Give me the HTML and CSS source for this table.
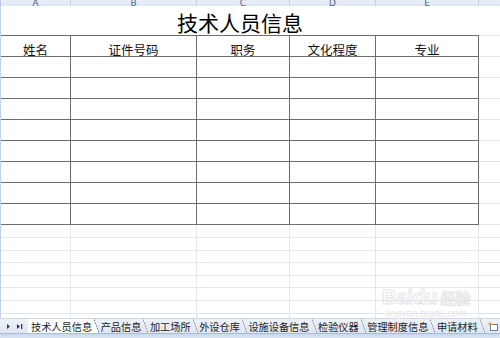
FILE: index.html
```html
<!DOCTYPE html>
<html lang="zh">
<head>
<meta charset="utf-8">
<link rel="stylesheet" href="styles.css">
</head>
<body>
<div class="app">
  <div class="colhead">
    <div class="ch edge"></div>
    <div class="ch">A</div>
    <div class="ch">B</div>
    <div class="ch">C</div>
    <div class="ch">D</div>
    <div class="ch">E</div>
    <div class="ch last"></div>
  </div>

  <div class="row title-row">
    <div class="edge"></div>
    <div class="c title">技术人员信息</div>
    <div class="c f"></div>
  </div>
  <div class="row head">
    <div class="edge"></div>
    <div class="c t">姓名</div>
    <div class="c t">证件号码</div>
    <div class="c t">职务</div>
    <div class="c t">文化程度</div>
    <div class="c t">专业</div>
    <div class="c f"></div>
  </div>
  <div class="row data"><div class="edge"></div><div class="c t"></div><div class="c t"></div><div class="c t"></div><div class="c t"></div><div class="c t"></div><div class="c f"></div></div>
  <div class="row data"><div class="edge"></div><div class="c t"></div><div class="c t"></div><div class="c t"></div><div class="c t"></div><div class="c t"></div><div class="c f"></div></div>
  <div class="row data"><div class="edge"></div><div class="c t"></div><div class="c t"></div><div class="c t"></div><div class="c t"></div><div class="c t"></div><div class="c f"></div></div>
  <div class="row data"><div class="edge"></div><div class="c t"></div><div class="c t"></div><div class="c t"></div><div class="c t"></div><div class="c t"></div><div class="c f"></div></div>
  <div class="row data"><div class="edge"></div><div class="c t"></div><div class="c t"></div><div class="c t"></div><div class="c t"></div><div class="c t"></div><div class="c f"></div></div>
  <div class="row data"><div class="edge"></div><div class="c t"></div><div class="c t"></div><div class="c t"></div><div class="c t"></div><div class="c t"></div><div class="c f"></div></div>
  <div class="row data"><div class="edge"></div><div class="c t"></div><div class="c t"></div><div class="c t"></div><div class="c t"></div><div class="c t"></div><div class="c f"></div></div>
  <div class="row data"><div class="edge"></div><div class="c t"></div><div class="c t"></div><div class="c t"></div><div class="c t"></div><div class="c t"></div><div class="c f"></div></div>

  <div class="blank">
    <div class="row b13"><div class="edge"></div><div class="c g"></div><div class="c g"></div><div class="c g"></div><div class="c g"></div><div class="c g"></div><div class="c f"></div></div>
    <div class="row b13"><div class="edge"></div><div class="c g"></div><div class="c g"></div><div class="c g"></div><div class="c g"></div><div class="c g"></div><div class="c f"></div></div>
    <div class="row b12"><div class="edge"></div><div class="c g"></div><div class="c g"></div><div class="c g"></div><div class="c g"></div><div class="c g"></div><div class="c f"></div></div>
    <div class="row b13"><div class="edge"></div><div class="c g"></div><div class="c g"></div><div class="c g"></div><div class="c g"></div><div class="c g"></div><div class="c f"></div></div>
    <div class="row b12"><div class="edge"></div><div class="c g"></div><div class="c g"></div><div class="c g"></div><div class="c g"></div><div class="c g"></div><div class="c f"></div></div>
    <div class="row b13"><div class="edge"></div><div class="c g"></div><div class="c g"></div><div class="c g"></div><div class="c g"></div><div class="c g"></div><div class="c f"></div></div>
    <div class="row b13"><div class="edge"></div><div class="c g"></div><div class="c g"></div><div class="c g"></div><div class="c g"></div><div class="c g"></div><div class="c f"></div></div>
    <div class="row b13"><div class="edge"></div><div class="c g"></div><div class="c g"></div><div class="c g"></div><div class="c g"></div><div class="c g"></div><div class="c f"></div></div>
  </div>

  <div class="tabs">
    <div class="nav">
      <svg width="28" height="15" viewBox="0 0 28 15">
        <path d="M7 5 L10 7.5 L7 10 Z" fill="#2a3a55"/>
        <path d="M17 5 L20 7.5 L17 10 Z" fill="#2a3a55"/>
        <rect x="21" y="5" width="1.3" height="5" fill="#2a3a55"/>
      </svg>
    </div>
    <div class="tab active">技术人员信息</div>
    <div class="tab">产品信息</div>
    <div class="tab">加工场所</div>
    <div class="tab">外设仓库</div>
    <div class="tab">设施设备信息</div>
    <div class="tab">检验仪器</div>
    <div class="tab">管理制度信息</div>
    <div class="tab">申请材料</div>
    <div class="tab newtab">
      <svg width="12" height="11" viewBox="0 0 12 11">
        <rect x="3.5" y="3.5" width="7" height="6" fill="#fff" stroke="#6d7f99"/>
        <path d="M3 0.5 L4 2.5 L6 3 L4 3.6 L3 5.5 L2 3.6 L0 3 L2 2.5 Z" fill="#f0a020"/>
      </svg>
    </div>
  </div>
  <div class="bottombar"></div>

  <div class="watermark">
    <div class="wm-logo">Bai<span class="paw">du</span><span class="jy">经验</span></div>
    <div class="wm-url">jingyan.baidu.com</div>
  </div>
</div>
</body>
</html>
```

FILE: styles.css
```css
html, body {
  margin: 0;
  padding: 0;
  background: #ffffff;
}

.app {
  position: relative;
  width: 500px;
  height: 338px;
  overflow: hidden;
  display: flex;
  flex-direction: column;
  font-family: "Noto Sans CJK SC", "Noto Sans", sans-serif;
  color: #111;
}

.colhead {
  display: grid;
  grid-template-columns: 1px 70px 126px 93px 86px 103px 1fr;
  height: 6px;
  flex: none;
  background: linear-gradient(#e9eff8, #dde6f3);
  overflow: hidden;
}

.ch {
  box-sizing: border-box;
  border-right: 1px solid #c2d1e6;
  font-family: "DejaVu Sans", sans-serif;
  font-size: 9px;
  line-height: 6px;
  color: #55657f;
  text-align: center;
  overflow: hidden;
}

.ch.edge {
  background: #b8cbe4;
  border: none;
}

.ch.last {
  border-right: none;
}

.row {
  display: grid;
  grid-template-columns: 1px 70px 126px 93px 86px 103px 1fr;
  flex: none;
}

.edge {
  background: #bfd2ea;
}

.c {
  box-sizing: border-box;
}

.title-row {
  height: 30px;
}

.title {
  grid-column: span 5;
  border-bottom: 1px solid #6e6e6e;
  font-size: 21px;
  line-height: 21px;
  text-align: center;
  padding-top: 6px;
  color: #000;
}

.c.f {
  border-bottom: 1px solid #dfe4ee;
}

.head, .data {
  height: 21px;
}

.c.t {
  border-right: 1px solid #6e6e6e;
  border-bottom: 1px solid #6e6e6e;
  font-size: 12.5px;
  line-height: 13px;
  text-align: center;
  padding-top: 7px;
  color: #111;
}

.blank {
  flex: 1;
  overflow: hidden;
  display: flex;
  flex-direction: column;
}

.b13 { height: 13px; }
.b12 { height: 12px; }

.c.g {
  border-right: 1px solid #e2e7f0;
  border-bottom: 1px solid #e2e7f0;
}

.tabs {
  flex: none;
  height: 15px;
  display: flex;
  align-items: stretch;
  background: linear-gradient(#eef2f8, #dfe6f0);
  border-top: 1px solid #cdd7e5;
  box-sizing: border-box;
  font-size: 10.2px;
  line-height: 13px;
  color: #1d1d1d;
  overflow: hidden;
}

.nav {
  width: 28px;
  flex: none;
}

.nav svg {
  display: block;
}

.tab {
  position: relative;
  flex: none;
  display: flex;
  align-items: center;
  padding: 0 2px 0 6.5px;
  white-space: nowrap;
}

.tab::before {
  content: "";
  position: absolute;
  left: 0;
  top: 0;
  bottom: 0;
  width: 5px;
  background: linear-gradient(to top right, transparent calc(50% - 0.6px), #8796ad 50%, transparent calc(50% + 0.6px));
}

.tab.active {
  background: #ffffff;
  padding-left: 3px;
}

.tab.active::before {
  display: none;
}

.tab.active + .tab::before {
  background: linear-gradient(to top right, #ffffff calc(50% - 0.6px), #6f7f98 50%, transparent calc(50% + 0.6px));
}

.newtab {
  padding-left: 7px;
}

.newtab svg {
  display: block;
}

.bottombar {
  flex: none;
  height: 5px;
  background: linear-gradient(#c9d8ec, #dbe6f4);
  border-top: 1px solid #a9bcd6;
  box-sizing: border-box;
}

.watermark {
  position: absolute;
  left: 382px;
  top: 286px;
  pointer-events: none;
}

.wm-logo {
  font-family: "Liberation Sans", sans-serif;
  font-weight: bold;
  font-size: 20px;
  line-height: 22px;
  color: transparent;
  -webkit-text-stroke: 1px #e6e6e6;
  white-space: nowrap;
}

.wm-logo .jy {
  font-family: "Noto Sans CJK SC", sans-serif;
  font-size: 15px;
  margin-left: 3px;
}

.wm-url {
  font-family: "Liberation Sans", sans-serif;
  font-size: 10px;
  line-height: 10px;
  color: #e8e8e8;
  margin-left: 4px;
  white-space: nowrap;
}
```
